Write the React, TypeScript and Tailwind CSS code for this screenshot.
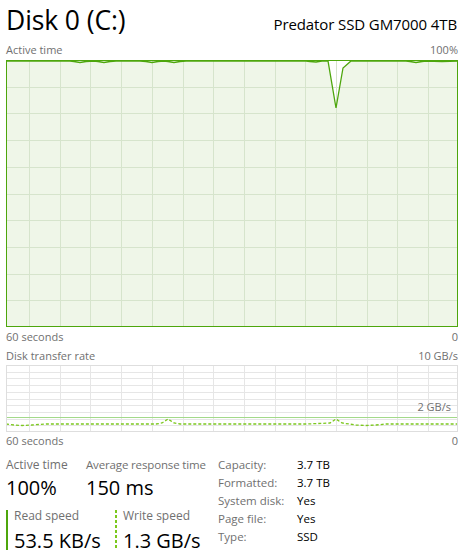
import React from "react";

const W = 452;
const H1 = 267;
const H2 = 67;
const vLines = Array.from({ length: 14 }, (_, i) => 23 + i * 30.7);
const hLines1 = Array.from({ length: 9 }, (_, i) => (i + 1) * (H1 / 10));
const hLines2 = Array.from({ length: 9 }, (_, i) => (i + 1) * (H2 / 10));

const topLine: [number, number][] = [
  [0, 1], [64, 1], [68, 1.5], [74, 2.5], [80, 1.5], [88, 1], [92, 1.5], [98, 2.5], [104, 1.5], [110, 1],
  [134, 1], [140, 1.5], [146, 2.5], [152, 1.5], [158, 1], [162, 1.5], [168, 2.5], [174, 1.5], [180, 1],
  [300, 1], [304, 1.5], [310, 2], [316, 1], [322, 1], [330, 48], [337, 8], [345, 1],
  [400, 1], [404, 1.5], [410, 2.5], [416, 1.5], [420, 1], [436, 1.5], [452, 1],
];

const dashLine: [number, number][] = [
  [0, 59], [8, 60], [16, 60.5], [26, 60], [40, 59], [100, 59], [150, 59], [156, 58], [162, 54],
  [168, 58], [174, 59], [300, 59], [324, 58], [330, 54], [336, 58], [350, 60], [360, 60.5],
  [370, 60], [380, 59], [440, 59], [452, 59],
];

function pts(p: [number, number][]) {
  return p.map(([x, y]) => `${x},${y}`).join(" ");
}

function Chart1() {
  const area = `0,${H1} ` + pts(topLine) + ` ${W},${H1}`;
  return (
    <svg width={W} height={H1} className="block" viewBox={`0 0 ${W} ${H1}`}>
      <rect x={0} y={0} width={W} height={H1} fill="#ffffff" />
      <polygon points={area} fill="#eff6e8" />
      {vLines.map((x) => (
        <line key={x} x1={Math.round(x) + 0.5} y1={0} x2={Math.round(x) + 0.5} y2={H1} stroke="#d6e4cc" strokeWidth={1} />
      ))}
      {hLines1.map((y) => (
        <line key={y} x1={0} y1={Math.round(y) + 0.5} x2={W} y2={Math.round(y) + 0.5} stroke="#d6e4cc" strokeWidth={1} />
      ))}
      <polyline points={pts(topLine)} fill="none" stroke="#4da60c" strokeWidth={1.3} />
      <rect x={0.5} y={0.5} width={W - 1} height={H1 - 1} fill="none" stroke="#4da60c" strokeWidth={1} />
    </svg>
  );
}

function Chart2() {
  return (
    <svg width={W} height={H2} className="block" viewBox={`0 0 ${W} ${H2}`}>
      <rect x={0} y={0} width={W} height={H2} fill="#ffffff" />
      {vLines.map((x) => (
        <line key={x} x1={Math.round(x) + 0.5} y1={0} x2={Math.round(x) + 0.5} y2={H2} stroke="#e6e6e6" strokeWidth={1} />
      ))}
      {hLines2.map((y) => (
        <line key={y} x1={0} y1={Math.round(y) + 0.5} x2={W} y2={Math.round(y) + 0.5} stroke="#e6e6e6" strokeWidth={1} />
      ))}
      <line x1={0} y1={52.5} x2={W} y2={52.5} stroke="#a3d98a" strokeWidth={1.2} />
      <polyline points={pts(dashLine)} fill="none" stroke="#7cc81e" strokeWidth={1.3} strokeDasharray="3 2" />
      <rect x={0.5} y={0.5} width={W - 1} height={H2 - 1} fill="none" stroke="#dedede" strokeWidth={1} />
    </svg>
  );
}

function Row({ label, value }: { label: string; value: string }) {
  return (
    <div className="flex h-[18px] items-center">
      <span className="w-[79px] text-[#707070]">{label}</span>
      <span className="text-black">{value}</span>
    </div>
  );
}

export default function App() {
  return (
    <div className="w-[463px] h-[557px] bg-white px-[6px] overflow-hidden font-['Open_Sans',sans-serif]">
      <div className="flex h-[40px] items-end justify-between">
        <span className="text-[26.5px] leading-none tracking-[-0.1px] text-black mb-[7px]">Disk 0 (C:)</span>
        <span className="text-[15px] leading-none text-black mb-[8px] tracking-[-0.1px]">Predator SSD GM7000 4TB</span>
      </div>
      <div className="flex h-[20px] items-center justify-between text-[11px] text-[#707070] w-[452px]">
        <span>Active time</span>
        <span>100%</span>
      </div>
      <Chart1 />
      <div className="flex h-[20px] items-center justify-between text-[11px] text-[#707070] w-[452px]">
        <span>60 seconds</span>
        <span>0</span>
      </div>
      <div className="flex h-[18px] items-center justify-between text-[11px] text-[#707070] w-[452px]">
        <span>Disk transfer rate</span>
        <span>10 GB/s</span>
      </div>
      <div className="relative">
        <Chart2 />
        <span className="absolute right-[6px] top-[36px] text-[11px] leading-none text-[#707070]">2 GB/s</span>
      </div>
      <div className="flex h-[18px] items-center justify-between text-[11px] text-[#707070] w-[452px]">
        <span>60 seconds</span>
        <span>0</span>
      </div>
      <div className="flex pt-[6px]">
        <div className="w-[212px] flex flex-col">
          <div className="flex">
            <div className="w-[80px]">
              <div className="text-[12px] leading-[18px] text-[#707070]">Active time</div>
              <div className="text-[20px] leading-[28px] text-black">100%</div>
            </div>
            <div>
              <div className="text-[11.5px] leading-[18px] text-[#707070] tracking-[-0.15px]">Average response time</div>
              <div className="text-[20px] leading-[28px] text-black">150 ms</div>
            </div>
          </div>
          <div className="flex mt-[8px]">
            <div className="w-[2px] h-[40px] bg-[#4da60c]" />
            <div className="w-[107px] pl-[6px]">
              <div className="text-[12px] leading-[12px] text-[#707070]">Read speed</div>
              <div className="text-[20px] leading-[28px] text-black mt-[5px]">53.5 KB/s</div>
            </div>
            <div className="w-[2px] h-[40px] bg-[repeating-linear-gradient(to_bottom,#7cc81e_0px,#7cc81e_3px,transparent_3px,transparent_5px)]" />
            <div className="pl-[6px]">
              <div className="text-[12px] leading-[12px] text-[#707070]">Write speed</div>
              <div className="text-[20px] leading-[28px] text-black mt-[5px]">1.3 GB/s</div>
            </div>
          </div>
        </div>
        <div className="flex flex-col text-[11.5px]">
          <Row label="Capacity:" value="3.7 TB" />
          <Row label="Formatted:" value="3.7 TB" />
          <Row label="System disk:" value="Yes" />
          <Row label="Page file:" value="Yes" />
          <Row label="Type:" value="SSD" />
        </div>
      </div>
    </div>
  );
}
